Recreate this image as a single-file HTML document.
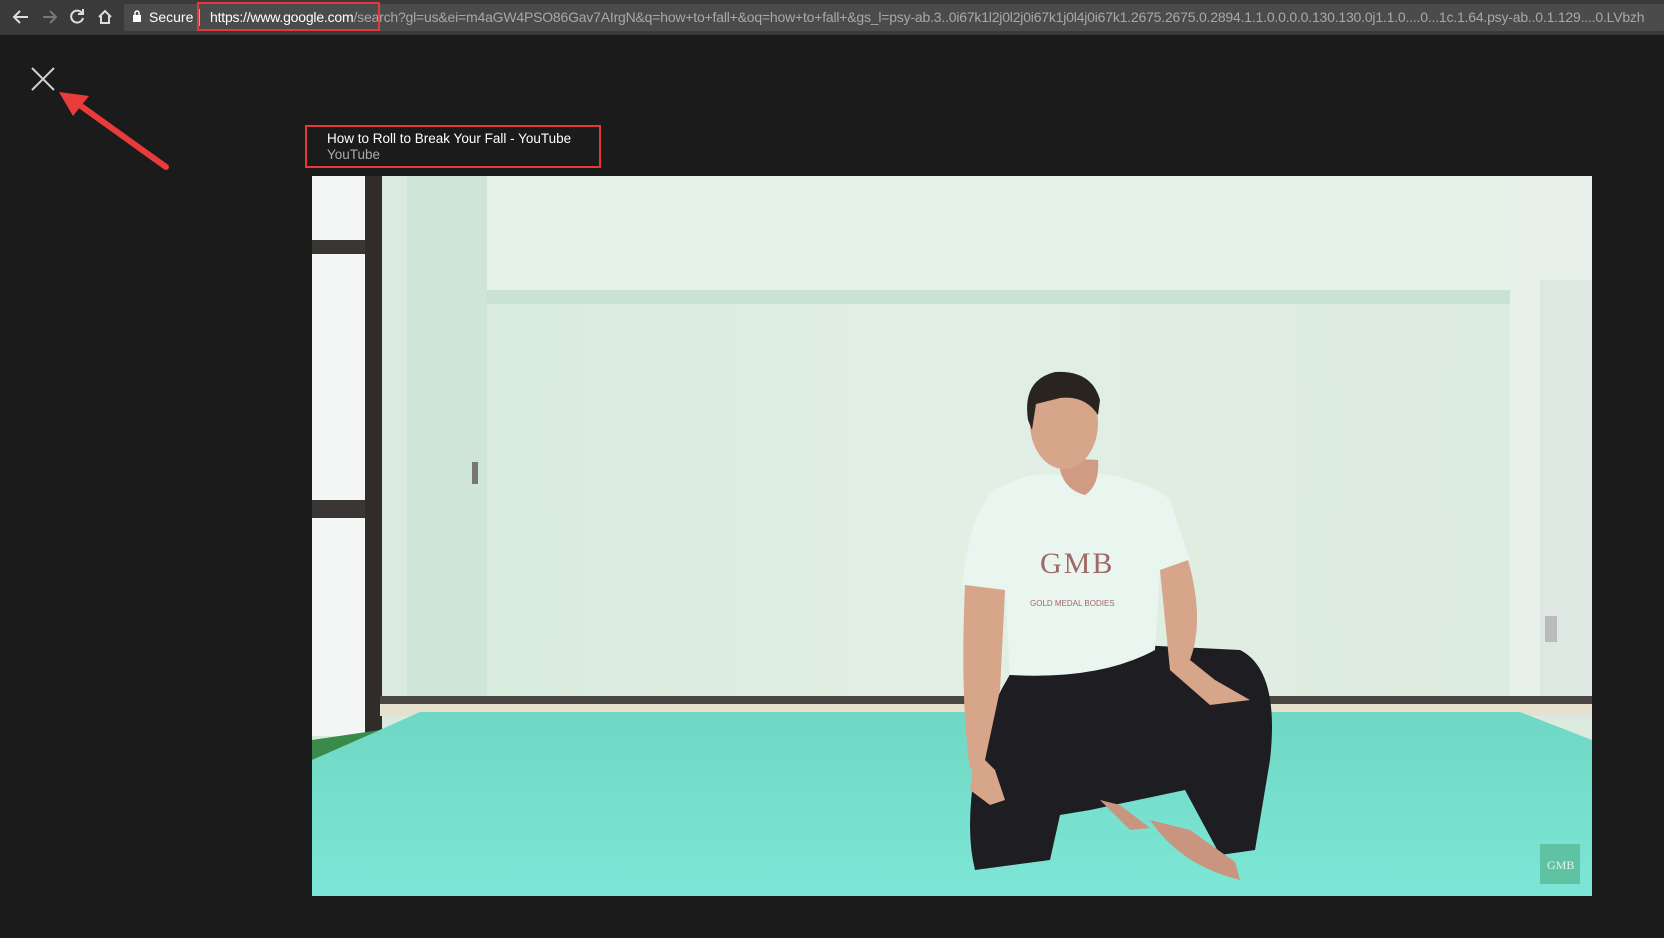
<!DOCTYPE html>
<html><head><meta charset="utf-8"><style>
html,body{margin:0;padding:0;background:#1b1b1b;width:1664px;height:938px;overflow:hidden;font-family:"Liberation Sans",Arial,sans-serif}
.bar{position:absolute;left:0;top:0;width:1664px;height:35px;background:#3a3a3a}
.url{position:absolute;left:124px;top:4px;width:1540px;height:27px;background:#4b4b4b;border-radius:2px}
.urltext{position:absolute;left:210px;top:9px;font-size:14px;color:#a8a8a8;white-space:nowrap;letter-spacing:-0.2px}
.urltext b{font-weight:normal;color:#fff}
.secure{position:absolute;left:149px;top:9px;font-size:14px;color:#fff}
.redbox{position:absolute;border:2px solid #e8373a;box-sizing:border-box}
.title{position:absolute;left:327px;top:131px;font-size:13.5px;color:#fff;line-height:16px}
.title span{color:#aaa}
</style></head><body>
<div class="bar"><div class="url"></div>
<svg style="position:absolute;left:0;top:0" width="120" height="35">
<g fill="none" stroke="#ddd" stroke-width="2">
<path d="M28 17H14M20 11l-6 6 6 6"/>
<path d="M43 17h12M50 11l6 6-6 6" stroke="#777"/>
<path d="M82 13a6 6 0 1 0 1 5" /><path d="M83 9v5h-5" />
<path d="M99 17l6-6 6 6M101 16v7h8v-7"/>
</g></svg>
<svg style="position:absolute;left:132px;top:10px" width="10" height="13"><rect x="1" y="5" width="8" height="7" fill="#fff"/><path d="M3 5V3a2 2 0 0 1 4 0v2" stroke="#fff" fill="none" stroke-width="1.5"/></svg>
<div class="secure">Secure</div>
<div style="position:absolute;left:199px;top:9px;width:1px;height:17px;background:#aaa"></div>
<div class="urltext"><b>https://www.google.com</b>/search?gl=us&amp;ei=m4aGW4PSO86Gav7AIrgN&amp;q=how+to+fall+&amp;oq=how+to+fall+&amp;gs_l=psy-ab.3..0i67k1l2j0l2j0i67k1j0l4j0i67k1.2675.2675.0.2894.1.1.0.0.0.0.130.130.0j1.1.0....0...1c.1.64.psy-ab..0.1.129....0.LVbzh</div>
</div>
<div class="redbox" style="left:197px;top:2px;width:183px;height:29px"></div>
<svg style="position:absolute;left:0;top:0" width="200" height="200">
<path d="M32 68L54 90M54 68L32 90" stroke="#cfcfcf" stroke-width="2"/>
<path d="M166 167L74 101" stroke="#e83c3c" stroke-width="6" stroke-linecap="round"/>
<path d="M59 92l30 4-16 20z" fill="#e83c3c"/>
</svg>
<div class="redbox" style="left:305px;top:125px;width:296px;height:43px"></div>
<div class="title">How to Roll to Break Your Fall - YouTube<br><span>YouTube</span></div>

<svg style="position:absolute;left:312px;top:176px" width="1280" height="720" viewBox="312 176 1280 720">
<defs>
<linearGradient id="wall" x1="0" y1="0" x2="1" y2="0"><stop offset="0" stop-color="#d6eadc"/><stop offset="0.5" stop-color="#e2efe4"/><stop offset="1" stop-color="#dcebdf"/></linearGradient>
<linearGradient id="floor" x1="0" y1="0" x2="0" y2="1"><stop offset="0" stop-color="#6fd8c4"/><stop offset="1" stop-color="#7de6d6"/></linearGradient>
</defs>
<rect x="312" y="176" width="1280" height="720" fill="url(#wall)"/>
<rect x="485" y="176" width="1025" height="115" fill="#e6f1e8"/>
<rect x="485" y="290" width="1025" height="14" fill="#c9e2d3"/>
<rect x="312" y="176" width="70" height="560" fill="#f4f6f6"/>
<rect x="312" y="240" width="70" height="14" fill="#3a3633"/>
<rect x="312" y="500" width="70" height="18" fill="#3a3633"/>
<rect x="365" y="176" width="17" height="560" fill="#2f2c2a"/>
<rect x="382" y="176" width="25" height="560" fill="#dbeae0"/>
<rect x="407" y="176" width="80" height="540" fill="#cfe5d8"/>
<rect x="472" y="462" width="6" height="22" fill="#777"/>
<rect x="1510" y="176" width="82" height="540" fill="#e7f0ea"/>
<rect x="1540" y="280" width="52" height="440" fill="#dce8e1"/>
<rect x="1545" y="616" width="12" height="26" fill="#bbb"/>
<rect x="380" y="696" width="1212" height="8" fill="#4a4643"/>
<rect x="380" y="704" width="1212" height="12" fill="#e6e1cf"/>
<path d="M312 760L420 712L1520 712L1592 740L1592 896L312 896Z" fill="url(#floor)"/>
<path d="M312 760L380 730L312 740Z" fill="#3a8a4a"/>
<!-- person -->
<path d="M1035 640 L1240 650 Q1280 670 1270 760 L1255 850 L1220 855 L1185 790 L1090 810 L1060 815 L1050 860 L975 870 Q965 830 975 770 Q985 700 1035 640Z" fill="#1e1d22"/>
<path d="M1150 820 Q1180 865 1240 880 L1235 862 L1190 830Z" fill="#c9957e"/>
<path d="M1100 800 L1130 830 L1150 828 L1120 805Z" fill="#c9957e"/>
<path d="M995 490 Q1030 470 1060 475 L1090 472 Q1150 480 1170 500 L1190 560 L1160 570 L1155 650 Q1100 680 1010 675 L1005 590 L962 585 Q970 510 995 490Z" fill="#e9f5ef"/>
<path d="M965 585 L1005 590 L1000 690 L985 760 L970 770 Q960 700 965 585Z" fill="#d7a58a"/>
<path d="M1160 570 L1188 560 Q1205 620 1190 660 L1215 680 L1250 700 L1210 705 L1170 670 Z" fill="#d7a58a"/>
<path d="M975 750 L995 770 L1005 800 L990 805 L970 790Z" fill="#d7a58a"/>
<path d="M1060 470 Q1065 490 1085 495 Q1100 485 1098 460 L1062 458Z" fill="#cf9c83"/>
<ellipse cx="1064" cy="423" rx="34" ry="46" fill="#d7a58a"/>
<path d="M1028 420 Q1022 380 1055 372 Q1092 370 1100 400 L1098 415 Q1085 395 1060 398 L1036 404 L1032 430Z" fill="#2a2420"/>
<text x="1040" y="573" font-family="Liberation Serif,serif" font-size="30" fill="#a06868" letter-spacing="2">GMB</text>
<text x="1030" y="606" font-family="Liberation Sans,sans-serif" font-size="8" fill="#a06868">GOLD MEDAL BODIES</text>
<rect x="1540" y="844" width="40" height="40" fill="#5fc3a3"/>
<text x="1547" y="869" font-family="Liberation Serif,serif" font-size="12" fill="#e0f5ee">GMB</text>
</svg>
</body></html>
